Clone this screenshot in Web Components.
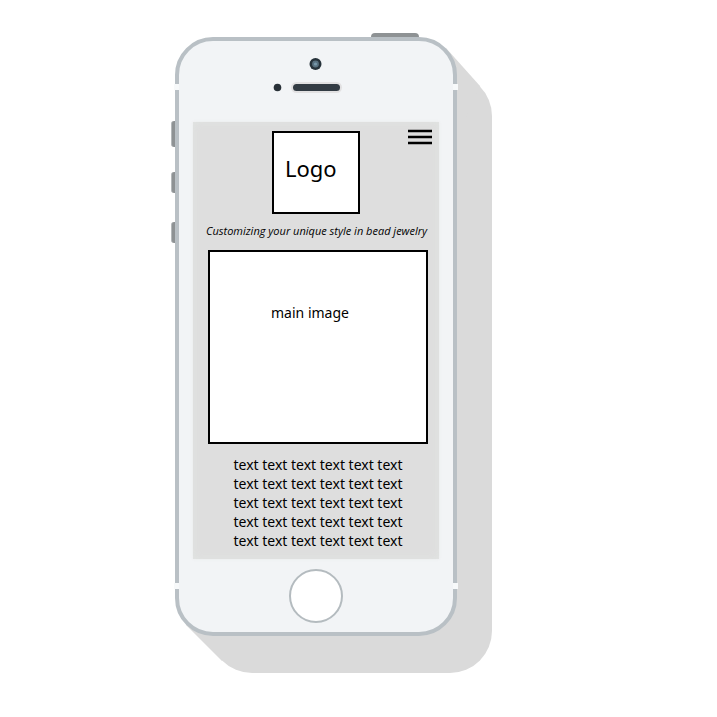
<!DOCTYPE html>
<html lang="en">
<head>
<meta charset="utf-8">
<meta name="viewport" content="width=device-width, initial-scale=1">
<title>Bead jewelry mobile wireframe</title>
<style>
body { margin: 0; background: #fff; color: #000; font-family: "Noto Sans", "Open Sans", sans-serif; }
</style>
</head>
<body>
<wire-stage>
  <phone-frame>
    <site-header>Logo</site-header>
    <tag-line>Customizing your unique style in bead jewelry</tag-line>
    <hero-image>main image</hero-image>
    <body-copy>
      <div>text text text text text text</div>
      <div>text text text text text text</div>
      <div>text text text text text text</div>
      <div>text text text text text text</div>
      <div>text text text text text text</div>
    </body-copy>
  </phone-frame>
</wire-stage>
<script>
const define = (name, html) => customElements.define(name, class extends HTMLElement {
  constructor() {
    super();
    this.attachShadow({ mode: "open" }).innerHTML = html;
  }
});

define("wire-stage", `
<style>
:host { display: grid; grid-template-columns: 175fr minmax(282px, 282fr) 260fr; padding: 37px 0 80px; }
::slotted(*) { grid-column: 2; }
</style>
<slot></slot>`);

define("phone-frame", `
<style>
:host { display: block; position: relative; z-index: 0; }
.shadow, .bridge, .key, .notch { position: absolute; }
.shadow { inset: 37px -35px -37px 35px; border-radius: 42px; background: #dadada; z-index: -2; }
.bridge { inset: 0 -35px -37px 0; background: #dadada; z-index: -2;
  clip-path: polygon(11px calc(100% - 48px), calc(100% - 46px) 11px, calc(100% - 12px) 49px, 47px calc(100% - 12px)); }
.key { left: -4px; width: 6px; box-sizing: border-box; background: #8e9294; border-left: 1px solid #b4b8ba; border-radius: 3px 0 0 3px; z-index: -1; }
.mute { top: 84px; height: 26px; }
.up { top: 135px; height: 21px; }
.down { top: 185px; height: 21px; }
.power { left: auto; right: 38px; top: -4px; width: 48px; height: 6px; border-left: 0; border-radius: 4px 4px 0 0; }
.body { position: relative; box-sizing: border-box; border: 4px solid #b9c0c5; border-radius: 38px; background: #f2f4f6; padding: 0 14px 9px; }
.notch { width: 5px; height: 6px; background: #f7f9fa; }
.tl { left: -5px; top: 43px; } .tr { right: -5px; top: 43px; }
.bl { left: -5px; bottom: 43px; } .br { right: -5px; bottom: 43px; }
.top { display: block; margin: 0 auto; }
.screen { background: #dedede; padding: 9px 11px 9px 15px; box-shadow: inset 0 0 8px #e1e4e2, 0 0 3px #e8eaea; }
.home { display: block; box-sizing: border-box; width: 54px; height: 54px; margin: 10px auto 0; padding: 0; border: 2px solid #b4bbbf; border-radius: 50%; background: #fff; }
</style>
<div class="shadow"></div><div class="bridge"></div>
<div class="key mute"></div><div class="key up"></div><div class="key down"></div><div class="key power"></div>
<div class="body">
  <div class="notch tl"></div><div class="notch tr"></div><div class="notch bl"></div><div class="notch br"></div>
  <svg class="top" width="90" height="81" viewBox="0 0 90 81" aria-hidden="true">
    <circle cx="44.500" cy="23" r="6" fill="#26323a"/>
    <circle cx="44.500" cy="23" r="3.400" fill="#587180"/>
    <circle cx="44.500" cy="23" r="1.600" fill="#7798aa"/>
    <circle cx="6.500" cy="46.500" r="3.800" fill="#293138"/>
    <rect x="20" y="41" width="51" height="11" rx="5.500" fill="#e2e1e2"/>
    <rect x="22" y="43" width="47" height="7" rx="3.500" fill="#333c44"/>
  </svg>
  <div class="screen"><slot></slot></div>
  <button class="home" type="button" aria-label="Home"></button>
</div>`);

define("site-header", `
<style>
:host { display: grid; grid-template-columns: 1fr auto 1fr; align-items: start; margin: 0 -11px 0 -15px; }
.logo { grid-column: 2; box-sizing: border-box; width: 88px; height: 83px; border: 2px solid #000; background: #fff; padding: 19px 0 0 11px; font-size: 22px; line-height: 32px; }
button { grid-column: 3; justify-self: end; margin: -2px 7px 0 0; padding: 0; border: 0; background: none; }
svg { display: block; }
</style>
<div class="logo"><slot></slot></div>
<button type="button" aria-label="Menu"><svg width="24" height="16" viewBox="0 0 24 16"><path d="M0 2h24M0 8h24M0 14h24" stroke="#000" stroke-width="2.300"/></svg></button>`);

define("tag-line", `
<style>
:host { display: block; margin: 0 -2px 0 -2px; padding: 9px 4px 11px 0; font: italic 11px/16px "Open Sans", "Noto Sans", sans-serif; text-align: center; white-space: nowrap; }
</style>
<slot></slot>`);

define("hero-image", `
<style>
:host { display: block; box-sizing: border-box; height: 194px; border: 2px solid #000; background: #fff; padding: 51px 16px 0 0; font-size: 14px; line-height: 20px; text-align: center; }
</style>
<slot></slot>`);

define("body-copy", `
<style>
:host { display: block; padding-top: 11px; font-size: 14px; line-height: 19px; text-align: center; }
</style>
<slot></slot>`);
</script>
</body>
</html>
